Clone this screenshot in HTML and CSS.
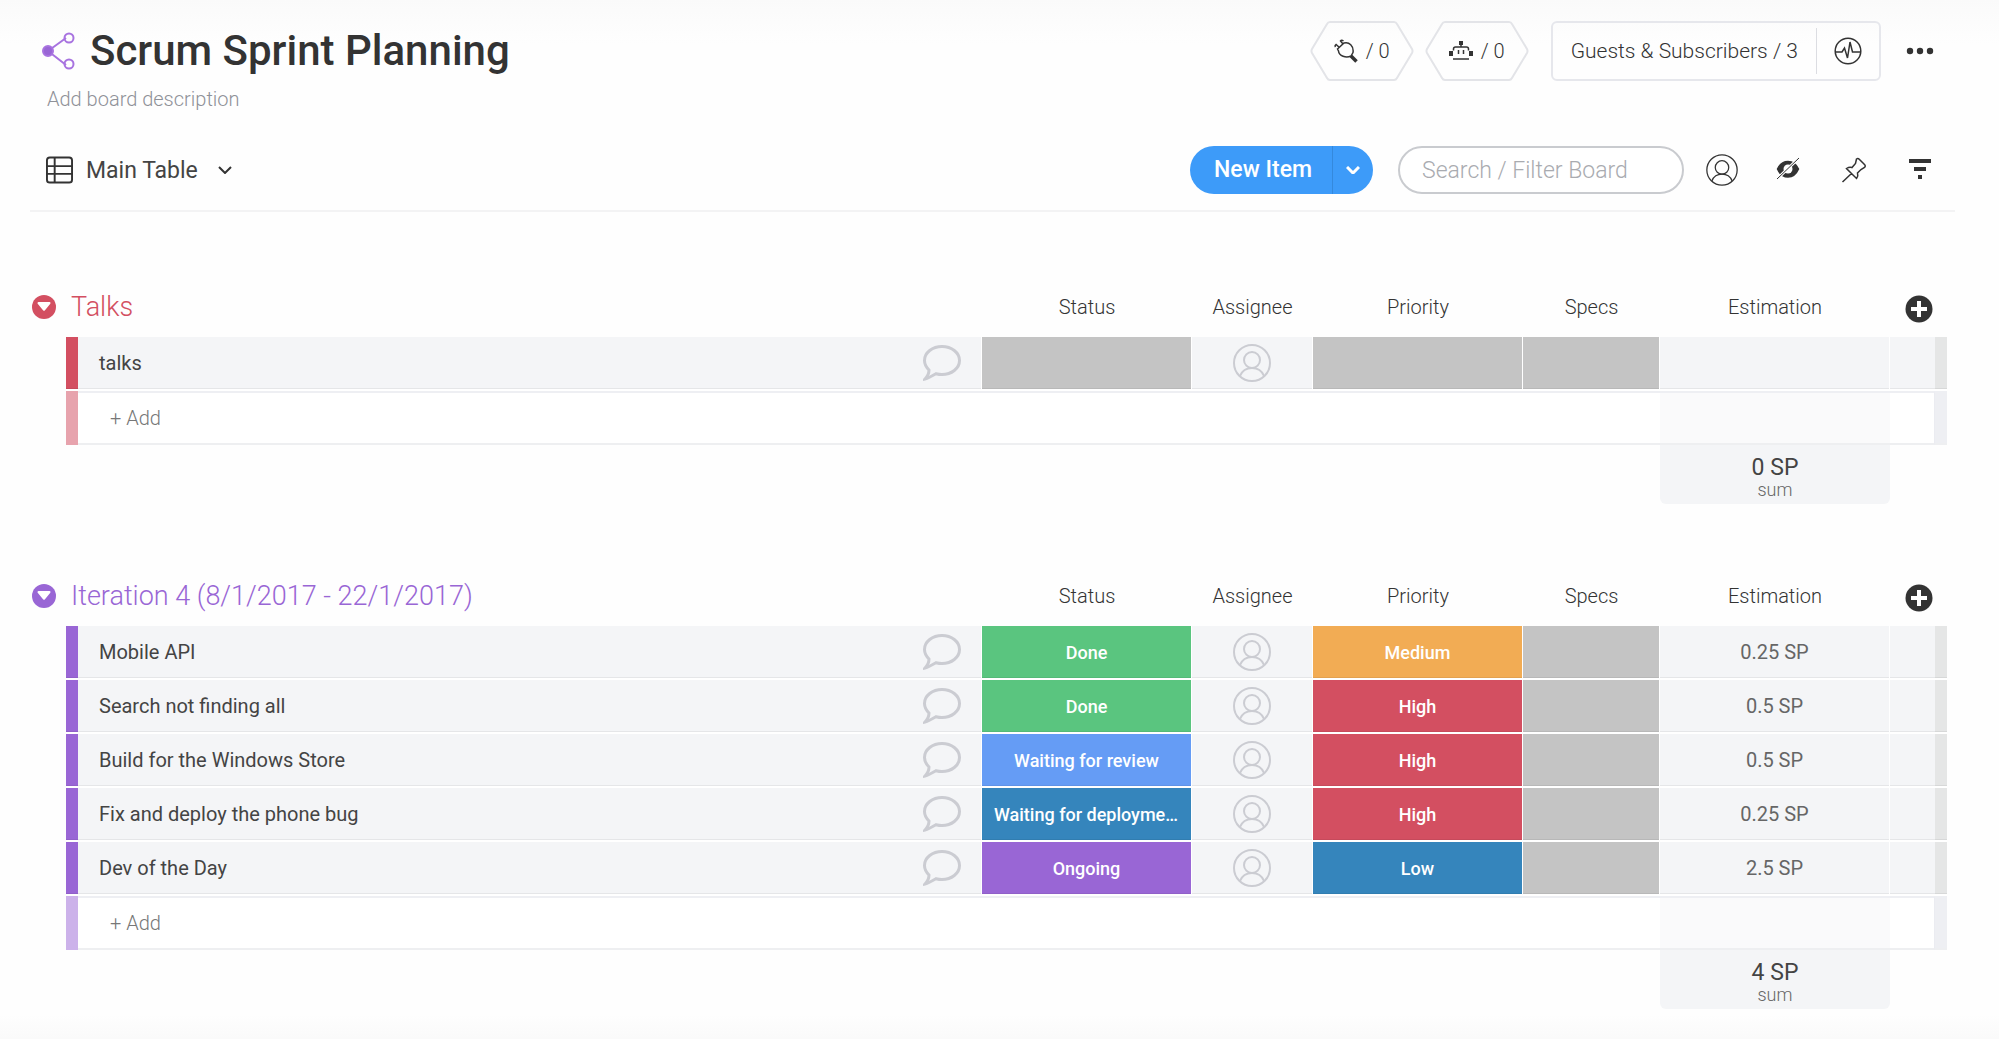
FILE: index.html
```html
<!DOCTYPE html>
<html lang="en">
<head>
    <meta charset="UTF-8">
    <meta name="viewport" content="width=device-width, initial-scale=1.0">
    <title>Scrum Sprint Planning</title>
    <link rel="stylesheet" href="styles.css">
</head>
<body>
    <!-- shared icons -->
    <svg class="sprite" aria-hidden="true">
        <symbol id="icon-person" viewBox="0 0 38 38">
            <circle cx="19" cy="19" r="18"/>
            <circle cx="19" cy="16" r="8"/>
            <path d="M7 32c2-5 6-8 12-8s10 3 12 8"/>
        </symbol>
        <symbol id="icon-chat" viewBox="0 0 38 36">
            <path d="M2 34c3-3 4-6 4-9C3 22 1.500 19 1.500 15.500 1.500 7.500 9.500 1.500 19 1.500s17.500 6 17.500 14-8 14-17.500 14c-2 0-4-.3-6-.8C10 30.500 6 33 2 34z"/>
        </symbol>
        <symbol id="icon-toggle" viewBox="0 0 24 24">
            <circle cx="12" cy="12" r="12" fill="currentColor"/>
            <path d="M6.500 8h11L12 14.800z" fill="#fff" stroke="#fff" stroke-linejoin="round"/>
        </symbol>
        <symbol id="icon-plus" viewBox="0 0 28 28">
            <circle cx="14" cy="14" r="13.500" fill="#333"/>
            <path d="M14 6v16M6 14h16" stroke="#fff" stroke-width="4"/>
        </symbol>
    </svg>

    <header class="board-header">
        <div class="title-row">
            <svg class="share-icon" viewBox="0 0 34 38">
                <path d="M6 19L24 6M6 19l18 14"/>
                <circle class="dot" cx="6" cy="19" r="5"/>
                <circle cx="27" cy="6" r="4.500"/>
                <circle cx="27" cy="32" r="4.500"/>
            </svg>
            <h1>Scrum Sprint Planning</h1>
            <div class="board-actions">
                <button class="hex">
                    <svg class="hex-shape" viewBox="0 0 104 60"><path d="M20 1h64q2 0 3 2l15 25q1 2 0 4L87 57q-1 2-3 2H20q-2 0-3-2L2 32q-1-2 0-4L17 3q1-2 3-2z"/></svg>
                    <svg class="hex-icon" viewBox="0 0 24 24"><path d="M3.500 10L10 4c5-1.500 10 3 9 9.500l-2 3.500c-5 2.500-12 0-12.500-5zM5.500 8.500L2 5.500q-1.500 1-.5 2.500M9 5L6.500 2q1-1.500 3 0"/><path d="M17 17l5.500 5.500" stroke-width="3.500"/></svg>
                    / 0
                </button>
                <button class="hex">
                    <svg class="hex-shape" viewBox="0 0 104 60"><path d="M20 1h64q2 0 3 2l15 25q1 2 0 4L87 57q-1 2-3 2H20q-2 0-3-2L2 32q-1-2 0-4L17 3q1-2 3-2z"/></svg>
                    <svg class="hex-icon" viewBox="0 0 24 24"><path d="M4.500 11.500V10q0-2 2-2h11q2 0 2 2v1.500M4 20h16M12 8V4M9.500 11v4M14.500 11v4"/><path d="M12 2v4M2 12v5M22 12v5" stroke-width="4"/></svg>
                    / 0
                </button>
                <div class="guests">
                    <button class="guests-label">Guests &amp; Subscribers / 3</button>
                    <button class="guests-activity" aria-label="Activity">
                        <svg viewBox="0 0 28 28"><circle cx="14" cy="14" r="12.800"/><path d="M1.500 15H8l2.500-4 3 10 2.500-16 2.500 10h7.500"/></svg>
                    </button>
                </div>
                <button class="icon-btn" aria-label="More">
                    <svg class="dots-icon" viewBox="0 0 28 8"><circle cx="4" cy="4" r="3.200"/><circle cx="14" cy="4" r="3.200"/><circle cx="24" cy="4" r="3.200"/></svg>
                </button>
            </div>
        </div>
        <p class="description">Add board description</p>

        <div class="toolbar">
            <button class="view-switch">
                <svg class="table-icon" viewBox="0 0 28 28"><rect x="1" y="1" width="26" height="26" rx="3"/><path d="M1 10h26M1 18h26M9 1v26"/></svg>
                Main Table
                <svg class="chevron" viewBox="0 0 14 8"><path d="M1 1l6 6 6-6"/></svg>
            </button>
            <div class="new-item">
                <button class="new-item-main">New Item</button>
                <button class="new-item-more" aria-label="More item types">
                    <svg class="chevron" viewBox="0 0 14 8"><path d="M1 1l6 6 6-6"/></svg>
                </button>
            </div>
            <input class="search" type="text" placeholder="Search / Filter Board" aria-label="Search / Filter Board">
            <div class="tools">
                <button class="icon-btn" aria-label="Person">
                    <svg class="person-tool"><use href="#icon-person"/></svg>
                </button>
                <button class="icon-btn" aria-label="Hidden columns">
                    <svg viewBox="0 0 28 28"><path d="M3.500 13q3.500-7.500 10.500-7.500T24.500 13q-3.500 8-10.500 8T3.500 13z" fill="#333"/><circle cx="14" cy="13" r="4.500" fill="#fff" stroke="none"/><path d="M3 23L25 2" stroke="#fff" stroke-width="3"/><path d="M3 23L25 2" stroke-width="1"/></svg>
                </button>
                <button class="icon-btn" aria-label="Pin">
                    <svg viewBox="0 0 28 28"><path d="M16.500 3q1.500-1 3 .5l5 5q1.500 1.500 0 3l-3.500 2-3.500 3.500q1 3-1 5.500L6.500 12.500q3-2 5.500-1l3.500-4zM11.500 17.500L2.500 26"/></svg>
                </button>
                <button class="icon-btn" aria-label="Filter">
                    <svg viewBox="0 0 28 28"><path d="M3 5h22M8 13h12M12 21h4" stroke-width="4"/></svg>
                </button>
            </div>
        </div>
    </header>

    <main class="board">
        <table class="group red">
            <colgroup>
                <col class="c-gutter"><col class="c-tag"><col><col class="c-status"><col class="c-person"><col class="c-status"><col class="c-specs"><col class="c-est"><col class="c-extra"><col class="c-tag">
            </colgroup>
            <thead>
                <tr>
                    <th colspan="3" class="group-title">
                        <div class="title-wrap">
                            <button class="toggle" aria-label="Collapse group"><svg><use href="#icon-toggle"/></svg></button>
                            <h2>Talks</h2>
                        </div>
                    </th>
                    <th>Status</th>
                    <th>Assignee</th>
                    <th>Priority</th>
                    <th>Specs</th>
                    <th>Estimation</th>
                    <th colspan="2"><button class="add-column" aria-label="Add column"><svg><use href="#icon-plus"/></svg></button></th>
                </tr>
            </thead>
            <tbody>
                <tr class="item">
                    <td class="gutter"></td>
                    <td class="tag"></td>
                    <td class="name"><div class="name-wrap">talks<svg class="chat"><use href="#icon-chat"/></svg></div></td>
                    <td class="label empty"></td>
                    <td class="person"><svg><use href="#icon-person"/></svg></td>
                    <td class="label empty"></td>
                    <td class="label empty"></td>
                    <td class="est"></td>
                    <td class="extra"></td>
                    <td class="end"></td>
                </tr>
                <tr class="add">
                    <td class="gutter"></td>
                    <td class="tag"></td>
                    <td colspan="5" class="add-cell"><button>+ Add</button></td>
                    <td class="add-est"></td>
                    <td class="add-extra"></td>
                    <td class="end"></td>
                </tr>
            </tbody>
            <tfoot>
                <tr>
                    <td colspan="7"></td>
                    <td class="sum"><div class="sum-value">0 SP</div><div class="sum-label">sum</div></td>
                    <td colspan="2"></td>
                </tr>
            </tfoot>
        </table>

        <table class="group purple">
            <colgroup>
                <col class="c-gutter"><col class="c-tag"><col><col class="c-status"><col class="c-person"><col class="c-status"><col class="c-specs"><col class="c-est"><col class="c-extra"><col class="c-tag">
            </colgroup>
            <thead>
                <tr>
                    <th colspan="3" class="group-title">
                        <div class="title-wrap">
                            <button class="toggle" aria-label="Collapse group"><svg><use href="#icon-toggle"/></svg></button>
                            <h2>Iteration 4 (8/1/2017 - 22/1/2017)</h2>
                        </div>
                    </th>
                    <th>Status</th>
                    <th>Assignee</th>
                    <th>Priority</th>
                    <th>Specs</th>
                    <th>Estimation</th>
                    <th colspan="2"><button class="add-column" aria-label="Add column"><svg><use href="#icon-plus"/></svg></button></th>
                </tr>
            </thead>
            <tbody>
                <tr class="item">
                    <td class="gutter"></td>
                    <td class="tag"></td>
                    <td class="name"><div class="name-wrap">Mobile API<svg class="chat"><use href="#icon-chat"/></svg></div></td>
                    <td class="label done">Done</td>
                    <td class="person"><svg><use href="#icon-person"/></svg></td>
                    <td class="label medium">Medium</td>
                    <td class="label empty"></td>
                    <td class="est">0.25 SP</td>
                    <td class="extra"></td>
                    <td class="end"></td>
                </tr>
                <tr class="item">
                    <td class="gutter"></td>
                    <td class="tag"></td>
                    <td class="name"><div class="name-wrap">Search not finding all<svg class="chat"><use href="#icon-chat"/></svg></div></td>
                    <td class="label done">Done</td>
                    <td class="person"><svg><use href="#icon-person"/></svg></td>
                    <td class="label high">High</td>
                    <td class="label empty"></td>
                    <td class="est">0.5 SP</td>
                    <td class="extra"></td>
                    <td class="end"></td>
                </tr>
                <tr class="item">
                    <td class="gutter"></td>
                    <td class="tag"></td>
                    <td class="name"><div class="name-wrap">Build for the Windows Store<svg class="chat"><use href="#icon-chat"/></svg></div></td>
                    <td class="label review">Waiting for review</td>
                    <td class="person"><svg><use href="#icon-person"/></svg></td>
                    <td class="label high">High</td>
                    <td class="label empty"></td>
                    <td class="est">0.5 SP</td>
                    <td class="extra"></td>
                    <td class="end"></td>
                </tr>
                <tr class="item">
                    <td class="gutter"></td>
                    <td class="tag"></td>
                    <td class="name"><div class="name-wrap">Fix and deploy the phone bug<svg class="chat"><use href="#icon-chat"/></svg></div></td>
                    <td class="label deploy">Waiting for deployment</td>
                    <td class="person"><svg><use href="#icon-person"/></svg></td>
                    <td class="label high">High</td>
                    <td class="label empty"></td>
                    <td class="est">0.25 SP</td>
                    <td class="extra"></td>
                    <td class="end"></td>
                </tr>
                <tr class="item">
                    <td class="gutter"></td>
                    <td class="tag"></td>
                    <td class="name"><div class="name-wrap">Dev of the Day<svg class="chat"><use href="#icon-chat"/></svg></div></td>
                    <td class="label ongoing">Ongoing</td>
                    <td class="person"><svg><use href="#icon-person"/></svg></td>
                    <td class="label deploy">Low</td>
                    <td class="label empty"></td>
                    <td class="est">2.5 SP</td>
                    <td class="extra"></td>
                    <td class="end"></td>
                </tr>
                <tr class="add">
                    <td class="gutter"></td>
                    <td class="tag"></td>
                    <td colspan="5" class="add-cell"><button>+ Add</button></td>
                    <td class="add-est"></td>
                    <td class="add-extra"></td>
                    <td class="end"></td>
                </tr>
            </tbody>
            <tfoot>
                <tr>
                    <td colspan="7"></td>
                    <td class="sum"><div class="sum-value">4 SP</div><div class="sum-label">sum</div></td>
                    <td colspan="2"></td>
                </tr>
            </tfoot>
        </table>
    </main>
</body>
</html>
```
FILE: styles.css
```css
* {
    margin: 0;
    padding: 0;
    box-sizing: border-box;
}
body {
    min-height: 100vh;
    background: linear-gradient(#fafafa, #fefefe 44px, #fefefe calc(100% - 24px), #fafafa);
    font-family: Roboto, "Liberation Sans", sans-serif;
    font-size: 20px;
    color: #333;
}
button {
    border: none;
    background: none;
    font: inherit;
    color: inherit;
    cursor: pointer;
}
svg {
    display: block;
    fill: none;
    stroke: #333;
    stroke-width: 2;
}
.sprite {
    position: absolute;
    width: 0;
    height: 0;
}

/* header */
.board-header {
    margin: 0 44px 0 30px;
    padding-top: 20px;
    border-bottom: 2px solid #f3f3f4;
}
.title-row {
    display: flex;
    align-items: center;
    height: 62px;
    padding: 0 7px 0 12px;
}
.share-icon {
    width: 34px;
    height: 38px;
    stroke: #a873e0;
}
.share-icon .dot {
    fill: #9966d5;
}
h1 {
    margin-left: 14px;
    font-size: 42px;
    font-weight: 500;
    line-height: 62px;
}
.board-actions {
    display: flex;
    align-items: center;
    gap: 11px;
    margin-left: auto;
}
.hex {
    position: relative;
    display: flex;
    align-items: center;
    justify-content: center;
    gap: 8px;
    width: 104px;
    height: 60px;
    font-weight: 300;
}
.hex-shape {
    position: absolute;
    inset: 0;
    stroke: #e3e4e8;
}
.hex-icon {
    width: 24px;
    height: 24px;
    stroke-width: 1.5;
}
.guests {
    display: flex;
    align-items: center;
    height: 60px;
    margin-left: 11px;
    border: 2px solid #e6e7ec;
    border-radius: 6px;
}
.guests-label {
    padding: 0 18px;
    font-size: 21px;
    font-weight: 300;
    line-height: 46px;
    border-right: 1px solid #dcdde2;
}
.guests-activity {
    padding: 0 17px;
}
.guests-activity svg {
    width: 28px;
    height: 28px;
    stroke-width: 1.5;
}
.icon-btn {
    display: flex;
    align-items: center;
    justify-content: center;
    width: 56px;
    height: 48px;
}
.icon-btn svg {
    width: 28px;
    height: 28px;
    stroke-width: 1.5;
}
.icon-btn .dots-icon {
    height: 8px;
    fill: #333;
    stroke: none;
}
.description {
    margin: 4px 0 0 17px;
    font-weight: 300;
    line-height: 26px;
    color: #8f9198;
}
.toolbar {
    display: flex;
    align-items: center;
    height: 98px;
    padding: 18px 0 0 16px;
}
.view-switch {
    display: flex;
    align-items: center;
    font-size: 23px;
    color: #444;
}
.table-icon {
    width: 27px;
    height: 28px;
    margin-right: 13px;
}
.chevron {
    width: 14px;
    height: 8px;
    margin-left: 20px;
}
.new-item {
    display: flex;
    align-items: center;
    height: 48px;
    margin-left: auto;
    border-radius: 24px;
    background: #3d9bf9;
    color: #fff;
    overflow: hidden;
}
.new-item-main {
    padding: 0 20px 0 24px;
    font-size: 23px;
    font-weight: 500;
    line-height: 48px;
    border-right: 1px solid #3489dd;
}
.new-item-more {
    height: 48px;
    padding: 0 13px;
}
.new-item .chevron {
    margin: 0;
    stroke: #fff;
    stroke-width: 3;
}
.search {
    width: 286px;
    height: 48px;
    margin: 0 10px 0 25px;
    padding: 0 22px;
    border: 2px solid #c9cbcf;
    border-radius: 24px;
    background: #fff;
    font: 300 23px Roboto, "Liberation Sans", sans-serif;
    outline: none;
}
.search::placeholder {
    color: #a9abb0;
}
.tools {
    display: flex;
    gap: 10px;
    padding-right: 7px;
}
.icon-btn .person-tool {
    width: 32px;
    height: 32px;
}

/* groups */
.board {
    margin: 65px 52px 0 32px;
}
.group {
    width: 100%;
    margin-bottom: 62px;
    table-layout: fixed;
    border-spacing: 0;
}
.group:last-child {
    margin-bottom: 0;
    padding-bottom: 28px;
}
.red {
    --group: #d34f61;
    --group-light: #e7a3ad;
}
.purple {
    --group: #9966d5;
    --group-light: #ccb2ea;
}
.c-gutter {
    width: 34px;
}
.c-tag {
    width: 12px;
}
.c-status {
    width: 210px;
}
.c-person {
    width: 121px;
}
.c-specs {
    width: 137px;
}
.c-est {
    width: 230px;
}
.c-extra {
    width: 45px;
}
th {
    height: 60px;
    font-weight: 300;
}
.title-wrap {
    display: flex;
    align-items: center;
    gap: 15px;
    color: var(--group);
}
.toggle svg {
    width: 24px;
    height: 24px;
    stroke: none;
}
h2 {
    font-size: 27px;
    font-weight: 300;
    line-height: 32px;
}
.add-column {
    display: block;
    margin: 4px auto 0;
}
.add-column svg {
    width: 28px;
    height: 28px;
    stroke: none;
}

/* item rows */
.item td {
    height: 54px;
    border-bottom: 2px solid #fff;
    border-right: 1px solid #fff;
    background: #f4f5f7;
    box-shadow: inset 0 -1px rgba(0, 0, 0, 0.06);
}
.group .gutter {
    border: none;
    background: none;
    box-shadow: none;
}
.group .tag {
    border-right: none;
    background: var(--group);
}
.item .name {
    padding: 0 20px 0 21px;
    color: #444;
}
.name-wrap {
    display: flex;
    align-items: center;
    justify-content: space-between;
}
.chat {
    width: 38px;
    height: 36px;
    stroke: #cbccd2;
    stroke-width: 3;
}
.label {
    padding: 0 12px;
    overflow: hidden;
    text-overflow: ellipsis;
    white-space: nowrap;
    text-align: center;
    font-size: 18px;
    font-weight: 500;
    color: #fff;
}
.item .empty {
    background: #c4c4c4;
}
.item .done {
    background: #5ac57f;
}
.item .medium {
    background: #f2ac54;
}
.item .high {
    background: #d34f61;
}
.item .review {
    background: #659cf5;
}
.item .deploy {
    background: #3585bc;
}
.item .ongoing {
    background: #9966d5;
}
.person svg {
    width: 38px;
    height: 38px;
    margin: 0 auto;
    stroke: #cbccd2;
}
.est {
    text-align: center;
    color: #666;
}
.item .extra {
    border-right: none;
}
.item .end {
    border-right: none;
    background: #e5e6e6;
}

/* add row and summary */
.add td {
    height: 54px;
    border-top: 2px solid #eeeff3;
    border-bottom: 2px solid #eeeff1;
}
.add .tag {
    border-color: var(--group-light);
    background: var(--group-light);
}
.add-cell {
    padding-left: 32px;
    background: #fff;
}
.add-cell button {
    font-weight: 300;
    color: #777;
}
.add-est {
    background: #fafafb;
}
.add .add-extra {
    border-right: 1px solid #ebecf1;
    background: #fff;
}
.add .end {
    background: #eeeff3;
}
.sum {
    height: 59px;
    padding-top: 6px;
    border-radius: 0 0 6px 6px;
    background: #f4f5f7;
    text-align: center;
}
.sum-value {
    font-size: 23px;
    line-height: 24px;
    color: #444;
}
.sum-label {
    font-size: 18px;
    font-weight: 300;
    line-height: 20px;
    color: #666;
}
```
